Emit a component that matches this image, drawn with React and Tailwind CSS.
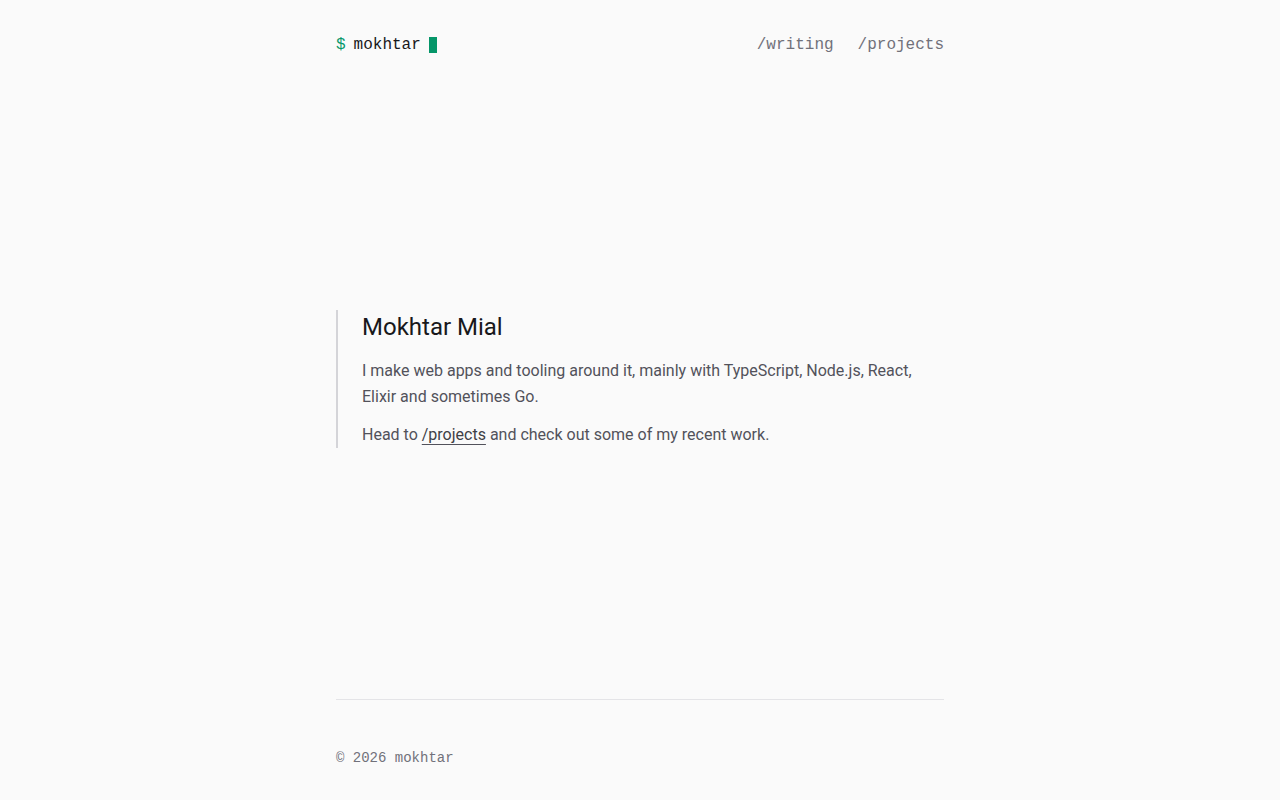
export default function App() {
  const mono = "font-['Liberation_Mono',monospace]";
  return (
    <div className="min-h-[800px] bg-[#fafafa] font-['Roboto',sans-serif] flex flex-col">
      <div className="w-[608px] mx-auto flex flex-col flex-1">
        <header className={`${mono} flex items-center justify-between pt-[33px] pb-[31px] text-base leading-6`}>
          <div className="flex items-center">
            <span className="text-[#059669]">$</span>
            <span className="ml-[8px] text-[#18181b]">mokhtar</span>
            <span className="ml-2 inline-block w-2 h-4 bg-[#059669]" />
          </div>
          <nav className="flex gap-6 text-[#71717a]">
            <a href="#">/writing</a>
            <a href="#">/projects</a>
          </nav>
        </header>

        <main className="flex-1 flex flex-col justify-center pb-[29px]">
          <section className="border-l-2 border-[#d4d4d8] pl-6">
            <h1 className="pt-px text-2xl leading-8 text-[#18181b]">Mokhtar Mial</h1>
            <p className="mt-[15px] text-base leading-[26px] text-[#52525b]">
              I make web apps and tooling around it, mainly with TypeScript, Node.js, React, Elixir and sometimes Go.
            </p>
            <p className="mt-3 text-base leading-[26px] text-[#52525b]">
              Head to{" "}
              <a href="#" className="underline underline-offset-4 decoration-[#52525b] text-[#3f3f46]">
                /projects
              </a>{" "}
              and check out some of my recent work.
            </p>
          </section>
        </main>

        <footer className="border-t border-[#e4e4e7] pt-12 pb-8">
          <p className={`${mono} text-sm leading-5 text-[#71717a]`}>© 2026 mokhtar</p>
        </footer>
      </div>
    </div>
  );
}
